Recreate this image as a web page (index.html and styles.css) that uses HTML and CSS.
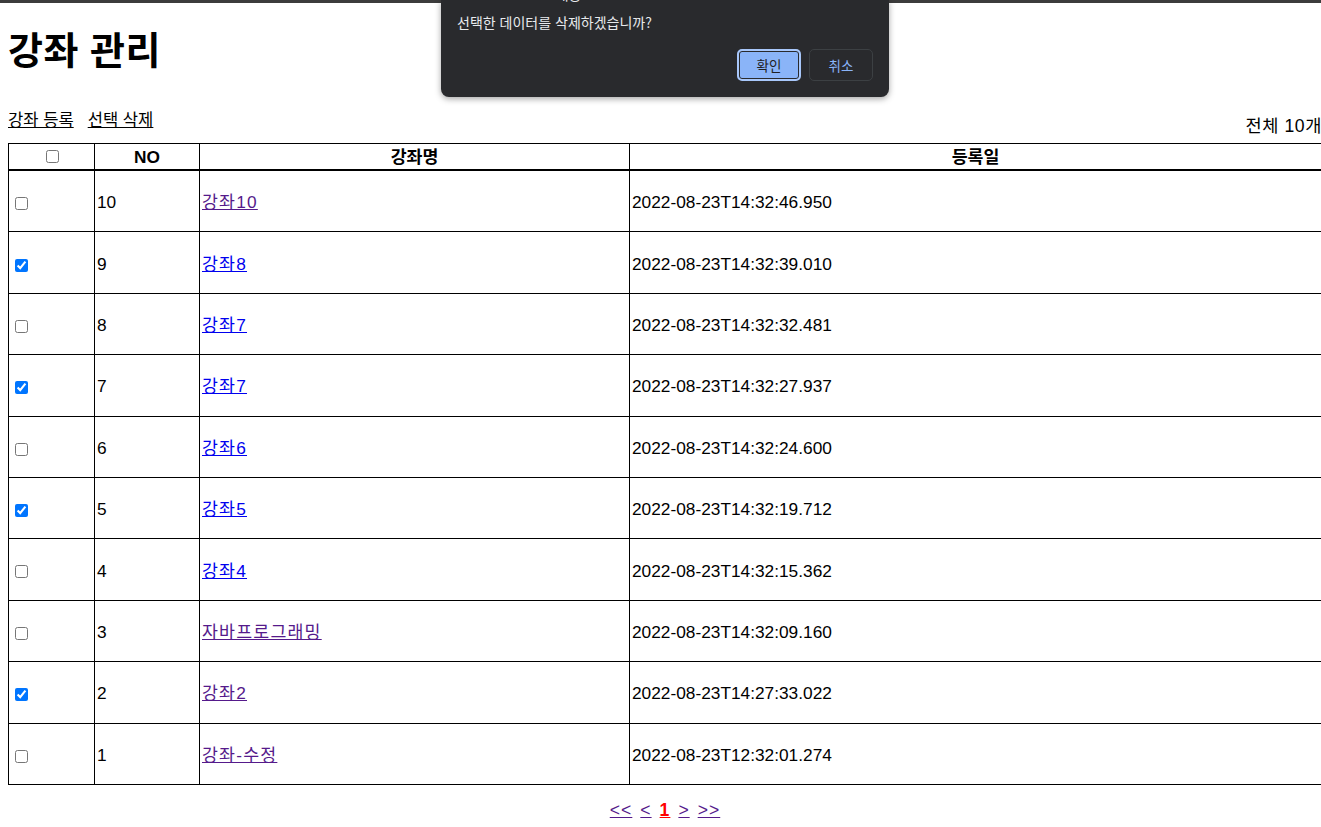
FILE: index.html
```html
<!DOCTYPE html>
<html lang="ko">
<head>
<meta charset="utf-8">
<title>강좌 관리</title>
<link rel="stylesheet" href="styles.css">
</head>
<body>
<div class="topbar"></div>
<div class="page">
  <h1 class="title">강좌 관리</h1>
  <div class="toolbar">
    <div class="actions">
      <a href="#" class="action">강좌 등록</a>
      <a href="#" class="action">선택 삭제</a>
    </div>
    <div class="total">전체 10개</div>
  </div>
  <table class="list">
    <colgroup>
      <col class="c-check"><col class="c-no"><col class="c-name"><col class="c-date">
    </colgroup>
    <thead>
      <tr><th><input type="checkbox"></th><th>NO</th><th>강좌명</th><th>등록일</th></tr>
    </thead>
    <tbody>
      <tr><td><input type="checkbox"></td><td>10</td><td><a href="#" class="visited">강좌10</a></td><td>2022-08-23T14:32:46.950</td></tr>
      <tr><td><input type="checkbox" checked></td><td>9</td><td><a href="#" class="fresh">강좌8</a></td><td>2022-08-23T14:32:39.010</td></tr>
      <tr><td><input type="checkbox"></td><td>8</td><td><a href="#" class="fresh">강좌7</a></td><td>2022-08-23T14:32:32.481</td></tr>
      <tr><td><input type="checkbox" checked></td><td>7</td><td><a href="#" class="fresh">강좌7</a></td><td>2022-08-23T14:32:27.937</td></tr>
      <tr><td><input type="checkbox"></td><td>6</td><td><a href="#" class="fresh">강좌6</a></td><td>2022-08-23T14:32:24.600</td></tr>
      <tr><td><input type="checkbox" checked></td><td>5</td><td><a href="#" class="fresh">강좌5</a></td><td>2022-08-23T14:32:19.712</td></tr>
      <tr><td><input type="checkbox"></td><td>4</td><td><a href="#" class="fresh">강좌4</a></td><td>2022-08-23T14:32:15.362</td></tr>
      <tr><td><input type="checkbox"></td><td>3</td><td><a href="#" class="visited">자바프로그래밍</a></td><td>2022-08-23T14:32:09.160</td></tr>
      <tr><td><input type="checkbox" checked></td><td>2</td><td><a href="#" class="visited">강좌2</a></td><td>2022-08-23T14:27:33.022</td></tr>
      <tr><td><input type="checkbox"></td><td>1</td><td><a href="#" class="visited">강좌-수정</a></td><td>2022-08-23T12:32:01.274</td></tr>
    </tbody>
  </table>
  <div class="pager">
    <a href="#" class="pg">&lt;&lt;</a>
    <a href="#" class="pg">&lt;</a>
    <a href="#" class="pg current">1</a>
    <a href="#" class="pg">&gt;</a>
    <a href="#" class="pg">&gt;&gt;</a>
  </div>
</div>

<div class="dialog">
  <div class="dlg-title">localhost:8080 내용:</div>
  <div class="dlg-msg">선택한 데이터를 삭제하겠습니까?</div>
  <div class="dlg-buttons">
    <button class="btn btn-ok">확인</button>
    <button class="btn btn-cancel">취소</button>
  </div>
</div>
</body>
</html>
```

FILE: styles.css
```css
html, body {
  margin: 0;
  padding: 0;
  background: #fff;
  overflow: hidden;
}

body {
  font-family: "Liberation Sans", "Noto Sans CJK KR", sans-serif;
  color: #000;
  width: 1321px;
  height: 827px;
  position: relative;
}

.topbar {
  height: 3px;
  background: #3c3c3c;
}

.page {
  padding-left: 8px;
  width: 1314px;
}

.title {
  margin: 23px 0 0;
  font-size: 38px;
  line-height: 50px;
  font-weight: bold;
  letter-spacing: 0.5px;
}

.toolbar {
  display: flex;
  justify-content: space-between;
  align-items: flex-start;
  margin-top: 35px;
}

.actions {
  display: flex;
  gap: 14px;
  font-size: 16.6px;
  line-height: 20px;
}

.action {
  color: #000;
}

.total {
  margin-top: 3px;
  font-size: 17.6px;
  line-height: 24px;
  letter-spacing: 0.6px;
}

.list {
  width: 1314px;
  margin-top: 5px;
  border-collapse: collapse;
  border: 1px solid #000;
  font-size: 17.3px;
  table-layout: fixed;
}

.c-check { width: 86px; }
.c-no { width: 105px; }
.c-name { width: 430px; }

.list th {
  border: 1px solid #000;
  border-bottom: 2px solid #000;
  height: 25px;
  padding: 0 2px;
  font-weight: bold;
  text-align: center;
  line-height: 22px;
}

.list td {
  border: 1px solid #000;
  height: 58.4px;
  padding: 2px 2px 0;
  text-align: left;
  line-height: 22px;
}

.list input[type="checkbox"] {
  width: 13px;
  height: 13px;
  margin: 3px 3px 3px 4px;
  vertical-align: middle;
}

.list th input[type="checkbox"] {
  margin-top: 0;
}

.list td a {
  letter-spacing: 1.2px;
}

.visited { color: #551a8b; }
.fresh { color: #0000ee; }

.pager {
  display: flex;
  justify-content: center;
  gap: 8px;
  margin-top: 14px;
  font-size: 17.6px;
  line-height: 22px;
}

.pg {
  color: #551a8b;
  letter-spacing: 1px;
}

.pg.current {
  color: #ff0000;
  font-weight: bold;
}

.dialog {
  position: absolute;
  left: 441px;
  top: 0;
  width: 416px;
  padding: 0 16px 16px;
  background: #292a2d;
  border-radius: 0 0 8px 8px;
  box-shadow: 0 2px 6px rgba(0, 0, 0, 0.35);
  color: #e8eaed;
  font-family: "Noto Sans CJK KR", "Liberation Sans", sans-serif;
  font-size: 14px;
  overflow: hidden;
  z-index: 10;
}

.dlg-title {
  line-height: 16px;
  margin-top: -14px;
}

.dlg-msg {
  line-height: 16px;
  margin-top: 12px;
}

.dlg-buttons {
  display: flex;
  justify-content: flex-end;
  gap: 8px;
  margin-top: 19px;
}

.btn {
  width: 64px;
  height: 32px;
  border-radius: 5px;
  font-family: "Noto Sans CJK KR", "Liberation Sans", sans-serif;
  font-size: 13.5px;
  padding: 0;
}

.btn-ok {
  background: #8ab4f8;
  color: #202124;
  border: 2px solid #a8c7fa;
  box-shadow: inset 0 0 0 1px #292a2d;
}

.btn-cancel {
  background: transparent;
  color: #8ab4f8;
  border: 1px solid #3c4043;
}
```
